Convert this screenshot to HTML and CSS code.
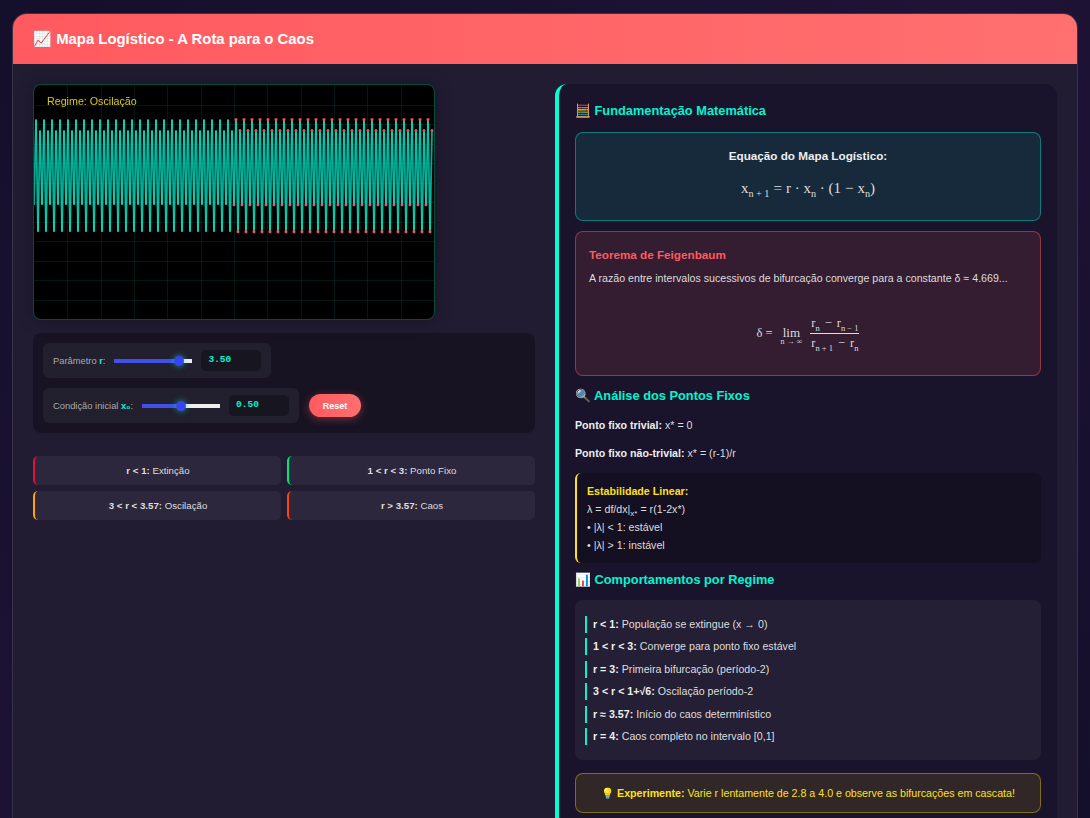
FILE: index.html
```html
<!DOCTYPE html>
<html lang="pt">
<head>
<meta charset="utf-8">
<title>Mapa Logístico</title>
<link rel="stylesheet" href="styles.css">
</head>
<body>
<div class="app">
  <header class="app-header"><h1>📈 Mapa Logístico - A Rota para o Caos</h1></header>
  <main class="content">
    <section class="left">
      <div class="plot">
        <canvas id="chart" width="400" height="234"></canvas>
        <div class="regime-label">Regime: Oscilação</div>
      </div>
      <div class="controls">
        <div class="control">
          <label>Parâmetro <strong class="accent">r</strong>:</label>
          <input class="slider fill-r" type="range" min="0" max="4" step="0.01" value="3.5">
          <span class="value">3.50</span>
        </div>
        <div class="control">
          <label>Condição inicial <strong class="accent">x₀</strong>:</label>
          <input class="slider fill-x" type="range" min="0" max="1" step="0.01" value="0.5">
          <span class="value">0.50</span>
        </div>
        <button class="reset">Reset</button>
      </div>
      <div class="regimes">
        <div class="regime extinct"><b>r &lt; 1:</b> Extinção</div>
        <div class="regime fixed"><b>1 &lt; r &lt; 3:</b> Ponto Fixo</div>
        <div class="regime osc"><b>3 &lt; r &lt; 3.57:</b> Oscilação</div>
        <div class="regime chaos"><b>r &gt; 3.57:</b> Caos</div>
      </div>
    </section>
    <section class="panel">
      <h2 class="first">🧮 Fundamentação Matemática</h2>
      <div class="box box-eq">
        <p class="eq-title">Equação do Mapa Logístico:</p>
        <div class="math math-main">x<sub>n + 1</sub><span class="op">=</span>r · x<sub>n</sub> · (1<span class="op">−</span>x<sub>n</sub>)</div>
      </div>
      <div class="box box-theorem">
        <h3>Teorema de Feigenbaum</h3>
        <p class="theorem-text">A razão entre intervalos sucessivos de bifurcação converge para a constante δ ≈ 4.669...</p>
        <div class="math math-limit">
          <span>δ =</span>
          <span class="lim">lim<small>n → ∞</small></span>
          <span class="frac">
            <span class="num">r<sub>n</sub><span class="op">−</span>r<sub>n − 1</sub></span>
            <span class="den">r<sub>n + 1</sub><span class="op">−</span>r<sub>n</sub></span>
          </span>
        </div>
      </div>
      <h2>🔍 Análise dos Pontos Fixos</h2>
      <p class="fixed-point"><b>Ponto fixo trivial:</b> x* = 0</p>
      <p class="fixed-point"><b>Ponto fixo não-trivial:</b> x* = (r-1)/r</p>
      <div class="stability">
        <b>Estabilidade Linear:</b><br>
        λ = df/dx|<sub>x*</sub> = r(1-2x*)<br>
        • |λ| &lt; 1: estável<br>
        • |λ| &gt; 1: instável
      </div>
      <h2 class="tight">📊 Comportamentos por Regime</h2>
      <ul class="behaviours">
        <li><b>r &lt; 1:</b> População se extingue (x → 0)</li>
        <li><b>1 &lt; r &lt; 3:</b> Converge para ponto fixo estável</li>
        <li><b>r = 3:</b> Primeira bifurcação (período-2)</li>
        <li><b>3 &lt; r &lt; 1+√6:</b> Oscilação período-2</li>
        <li><b>r ≈ 3.57:</b> Início do caos determinístico</li>
        <li><b>r = 4:</b> Caos completo no intervalo [0,1]</li>
      </ul>
      <div class="tip"><span>💡 <b>Experimente:</b> Varie r lentamente de 2.8 a 4.0 e observe as bifurcações em cascata!</span></div>
    </section>
  </main>
</div>
<script src="chart.js"></script>
</body>
</html>
```
FILE: styles.css
```css
* { box-sizing: border-box; }
html, body { height: 100%; }
body {
  margin: 0;
  padding: 13px 12px 0;
  overflow: hidden;
  background: linear-gradient(135deg, #140f2b 0%, #1f1336 50%, #140f2b 100%);
  font-family: "Liberation Sans", Arial, sans-serif;
  color: #e6e6e6;
}
.app {
  width: 1066px;
  min-height: 900px;
  border: 1px solid rgba(255,255,255,.1);
  border-radius: 15px 15px 0 0;
  background: #221c33;
  overflow: hidden;
}
.app-header {
  height: 50px;
  padding: 0 20px;
  display: flex;
  align-items: center;
  background: linear-gradient(90deg, #ff5a5f, #ff7070);
}
h1 { margin: 0; font-size: 14.9px; font-weight: 700; color: #fff; }
.content {
  display: grid;
  grid-template-columns: 1fr 1fr;
  gap: 20px;
  padding: 20px;
}
.left { min-width: 0; }
.plot {
  position: relative;
  width: 402px;
  height: 236px;
  border: 1px solid rgba(0,255,200,.3);
  border-radius: 8px;
  background: #000;
  box-shadow: 0 0 16px rgba(0,0,0,.35);
  overflow: hidden;
}
#chart { display: block; }
.regime-label {
  position: absolute;
  left: 13px;
  top: 10px;
  font-size: 10.7px;
  color: #d8c81a;
}
.controls {
  margin-top: 13px;
  padding: 10px;
  display: flex;
  flex-wrap: wrap;
  align-items: center;
  gap: 10px;
  background: rgba(0,0,0,.3);
  border-radius: 8px;
}
.control {
  height: 35px;
  padding: 0 10px;
  display: flex;
  align-items: center;
  gap: 9px;
  background: rgba(255,255,255,.05);
  border-radius: 6px;
  font-size: 9.35px;
  color: #aaa;
}
.control label { white-space: nowrap; }
.accent { color: #00f5d4; }
.slider {
  -webkit-appearance: none;
  appearance: none;
  width: 78px;
  height: 4px;
  margin: 0;
  border-radius: 0;
  outline: none;
}
.fill-r { background: linear-gradient(90deg, #4050e8 83%, #eee 83%); }
.fill-x { background: linear-gradient(90deg, #4050e8 50%, #eee 50%); }
.slider::-webkit-slider-thumb {
  -webkit-appearance: none;
  width: 10px;
  height: 10px;
  border-radius: 50%;
  background: #3a44f5;
  box-shadow: 0 0 6px rgba(0,245,212,.6);
}
.value {
  width: 60px;
  height: 21px;
  padding: 4px 7px;
  background: rgba(0,0,0,.3);
  border-radius: 5px;
  font-family: "Liberation Mono", monospace;
  font-size: 9.5px;
  font-weight: 700;
  color: #00f5d4;
}
.reset {
  width: 52px;
  height: 23px;
  padding: 0;
  border: 0;
  border-radius: 12px;
  background: linear-gradient(90deg, #ff5a5f, #ff7070);
  box-shadow: 0 2px 8px rgba(255,90,95,.4);
  font-family: inherit;
  font-size: 9px;
  font-weight: 700;
  color: #fff;
}
.regimes {
  margin-top: 23px;
  display: grid;
  grid-template-columns: 1fr 1fr;
  gap: 6px;
}
.regime {
  height: 29px;
  border-left: 2px solid;
  border-radius: 5px;
  background: rgba(255,255,255,.05);
  font-size: 9.7px;
  line-height: 29px;
  text-align: center;
  color: #ddd;
}
.extinct { border-left-color: #dc143c; }
.fixed { border-left-color: #00e676; }
.osc { border-left-color: #ffa500; }
.chaos { border-left-color: #ff4500; }
.panel {
  height: 900px;
  padding: 16px 16px 16px;
  border-left: 4px solid #00ffd5;
  border-radius: 12px;
  background: rgba(10,5,30,.35);
}
h2 {
  margin: 12px 0 13px;
  font-size: 12.8px;
  line-height: 15px;
  font-weight: 700;
  color: #00f5d4;
}
h2.first { margin-top: 3px; margin-bottom: 14px; }
h2.tight { margin-top: 9px; margin-bottom: 13px; }
.box { border: 1px solid; border-radius: 8px; }
.box-eq {
  height: 89px;
  padding-top: 16px;
  text-align: center;
  background: rgba(0,245,212,.1);
  border-color: rgba(0,245,212,.4);
}
.eq-title { margin: 0; font-size: 11.7px; font-weight: 700; color: #eee; }
.math { font-family: "Liberation Serif", serif; color: #ddd; }
.math sub { font-size: .68em; line-height: 0; }
.math-main { margin-top: 18px; font-size: 15px; }
.op { padding: 0 4px; }
.box-theorem {
  height: 145px;
  margin-top: 10px;
  padding: 16px 13px;
  background: rgba(255,90,95,.12);
  border-color: rgba(255,90,95,.45);
}
.box-theorem h3 { margin: 0; font-size: 11.7px; font-weight: 700; color: #ff5a5f; }
.theorem-text { margin: 11px 0 0; font-size: 10.65px; color: #ddd; }
.math-limit {
  margin-top: 32px;
  display: flex;
  justify-content: center;
  align-items: center;
  gap: 8px;
  font-size: 12.5px;
}
.lim { display: flex; flex-direction: column; align-items: center; line-height: 11px; font-size: 13px; padding-top: 5px; }
.lim small { font-size: 8px; line-height: 7px; }
.frac { display: flex; flex-direction: column; align-items: center; }
.num { padding: 0 1px 2px; border-bottom: 1px solid #ddd; }
.den { padding: 2px 1px 0; }
.frac .op { padding: 0 5px; }
.fixed-point { margin: 0 0 15px; padding-top: 3px; font-size: 10.67px; line-height: 13px; color: #ddd; }
.fixed-point + .fixed-point { padding-top: 0; margin-bottom: 13px; }
.fixed-point b { color: #eee; }
.stability {
  height: 90px;
  padding: 9px 10px;
  border-left: 2px solid #ffe119;
  border-radius: 6px;
  background: rgba(0,0,0,.2);
  font-size: 10.67px;
  line-height: 18px;
  color: #ddd;
}
.stability b { color: #ffe119; }
.stability sub { font-size: 8px; line-height: 0; }
.behaviours {
  list-style: none;
  margin: 0;
  height: 160px;
  padding: 16px 10px;
  background: rgba(255,255,255,.05);
  border-radius: 8px;
  display: flex;
  flex-direction: column;
  gap: 5.4px;
}
.behaviours li {
  height: 17px;
  padding-left: 6px;
  border-left: 2px solid #00f5d4;
  font-size: 10.67px;
  line-height: 17px;
  color: #ddd;
}
.behaviours b { color: #eee; }
.tip {
  margin-top: 13px;
  height: 40px;
  border: 1px solid rgba(255,215,0,.4);
  border-radius: 8px;
  background: rgba(255,215,0,.1);
  line-height: 38px;
  text-align: center;
  font-size: 10.67px;
  color: #ffe119;
}
```
FILE: chart.js
```js
(function () {
  var canvas = document.getElementById('chart');
  var ctx = canvas.getContext('2d');
  var w = canvas.width, h = canvas.height;
  var i;

  ctx.strokeStyle = 'rgba(0,245,212,.1)';
  ctx.lineWidth = 1;
  for (i = 1; i < 12; i++) {
    var gx = Math.round(i * w / 12) + 0.5, gy = Math.round(i * h / 12) + 0.5;
    ctx.beginPath(); ctx.moveTo(gx, 0); ctx.lineTo(gx, h); ctx.stroke();
    ctx.beginPath(); ctx.moveTo(0, gy); ctx.lineTo(w, gy); ctx.stroke();
  }

  var r = 3.5, x = 0.5, pts = [];
  for (i = 0; i < 200; i++) {
    pts.push([i * 2, h - x * 228]);
    x = r * x * (1 - x);
  }

  ctx.strokeStyle = 'rgba(0,245,212,.7)';
  ctx.lineWidth = 1.8;
  for (i = 1; i < pts.length; i++) {
    ctx.beginPath();
    ctx.moveTo(pts[i - 1][0], pts[i - 1][1]);
    ctx.lineTo(pts[i][0], pts[i][1]);
    ctx.stroke();
  }

  ctx.fillStyle = '#ff4d5a';
  pts.slice(100).forEach(function (p) {
    ctx.beginPath(); ctx.arc(p[0], p[1], 1.5, 0, Math.PI * 2); ctx.fill();
  });
})();
```
